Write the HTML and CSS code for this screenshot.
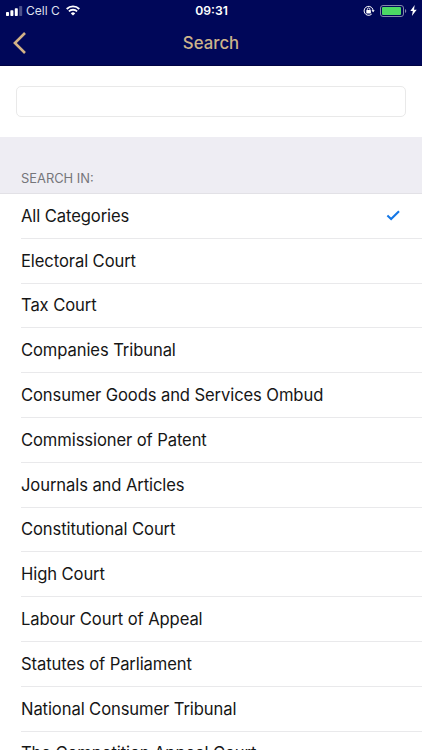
FILE: index.html
```html
<!DOCTYPE html>
<html lang="en">
  <head>
    <meta charset="UTF-8" />
    <meta name="viewport" content="width=device-width, initial-scale=1.0" />
    <title>Search</title>
    <link rel="stylesheet" href="styles.css">
  </head>
  <body>
    <header class="header">
      <div class="status-bar">
        <div class="status-left">
          <svg class="signal" width="17" height="10" viewBox="0 0 17 10" fill="#fff">
            <rect x="0" y="6" width="3" height="4" rx="0.7" />
            <rect x="4.4" y="4.2" width="3" height="5.8" rx="0.7" />
            <rect x="8.8" y="2.2" width="3" height="7.8" rx="0.7" />
            <rect x="13.2" y="0" width="3" height="10" rx="0.7" opacity="0.3" />
          </svg>
          <span class="carrier">Cell C</span>
          <svg class="wifi" width="14" height="11" viewBox="0 0 14 11" fill="none" stroke="#fff" stroke-width="1.8">
            <path d="M0.7 4a9 9 0 0 1 12.6 0" />
            <path d="M2.9 6.4a5.9 5.9 0 0 1 8.2 0" />
            <path d="M7 10.6L4.8 8.4a3.2 3.2 0 0 1 4.4 0z" fill="#fff" stroke="none" />
          </svg>
        </div>
        <span class="time">09:31</span>
        <div class="status-right">
          <svg width="12" height="12" viewBox="0 0 12 12" fill="none" stroke="#fff">
            <path d="M10.1 6.1a4.5 4.5 0 1 0-1.4 3" />
            <path d="M8.5 5.2h3.2L10.1 7.3z" fill="#fff" stroke="none" />
            <rect x="3.3" y="5" width="4.6" height="3.4" rx="0.4" fill="#fff" stroke="none" />
            <path d="M4.3 5.2V4.3a1.3 1.3 0 0 1 2.6 0v.9" stroke-width="0.9" />
          </svg>
          <svg width="27" height="12" viewBox="0 0 27 12">
            <rect x="0.5" y="0.5" width="23" height="11" rx="2.5" fill="none" stroke="#8286aa" />
            <rect x="2" y="2" width="19" height="8" rx="1" fill="#4cd964" />
            <path d="M25 4v4a2.2 2.2 0 0 0 0-4z" fill="#8286aa" />
          </svg>
          <svg width="7" height="11" viewBox="0 0 7 11" fill="#fff">
            <path d="M4.7 0L0.3 6h2.5L1.9 11 6.7 4.7H4z" />
          </svg>
        </div>
      </div>
      <div class="nav-bar">
        <a href="#" class="back" aria-label="Back">
          <svg width="14" height="22" viewBox="0 0 14 22" fill="none" stroke="#d2b286" stroke-width="2.6">
            <path d="M12 1L1.9 11 12 21" />
          </svg>
        </a>
        <h1>Search</h1>
      </div>
    </header>

    <div class="search-box">
      <input type="text" class="search-input" aria-label="Search" />
    </div>

    <h2 class="section-title">SEARCH IN:</h2>

    <ul class="categories">
      <li class="category">
        All Categories
        <svg class="check" width="14" height="11" viewBox="0 0 14 11" fill="none" stroke="#1477e6" stroke-width="2.1">
          <path d="M1.4 5.6l3.7 3.4L13 1.2" />
        </svg>
      </li>
      <li class="category">Electoral Court</li>
      <li class="category">Tax Court</li>
      <li class="category">Companies Tribunal</li>
      <li class="category">Consumer Goods and Services Ombud</li>
      <li class="category">Commissioner of Patent</li>
      <li class="category">Journals and Articles</li>
      <li class="category">Constitutional Court</li>
      <li class="category">High Court</li>
      <li class="category">Labour Court of Appeal</li>
      <li class="category">Statutes of Parliament</li>
      <li class="category">National Consumer Tribunal</li>
      <li class="category">The Competition Appeal Court</li>
    </ul>
  </body>
</html>
```
FILE: styles.css
```css
:root {
  --navy: #000759;
  --gold: #cdb38b;
  --section-bg: #eeedf3;
  --line: #e9e9eb;
  --text: #161616;
}

* {
  box-sizing: border-box;
  margin: 0;
  padding: 0;
}

body {
  height: 100vh;
  overflow: hidden;
  background: #fff;
  color: var(--text);
  font-family: Inter, "Liberation Sans", sans-serif;
}

.header {
  height: 66px;
  background: var(--navy);
  border-bottom: 1px solid #000344;
}

.status-bar {
  display: grid;
  grid-template-columns: 1fr auto 1fr;
  align-items: center;
  height: 21px;
  padding: 0 5px 0 6px;
  color: #fff;
  font-size: 12px;
}

.status-left,
.status-right {
  display: flex;
  align-items: center;
}

.carrier {
  margin: 0 6px 0 3px;
  font-size: 12px;
  color: #dfe0ee;
}

.time {
  font-weight: 600;
  font-size: 12.2px;
}

.status-right {
  justify-content: flex-end;
  gap: 5px;
}

.status-right svg:last-child {
  margin-left: -2px;
}

.nav-bar {
  display: grid;
  grid-template-columns: 1fr auto 1fr;
  align-items: center;
  height: 43px;
  padding: 0 13px;
}

.back {
  display: flex;
}

h1 {
  color: var(--gold);
  font-size: 16.8px;
  font-weight: 500;
}

.search-box {
  height: 71px;
  padding: 20px 16px 0;
}

.search-input {
  display: block;
  width: 100%;
  height: 31px;
  padding: 0 8px;
  border: 1px solid #e9e9e9;
  border-radius: 5px;
  background: #fff;
  font: inherit;
  outline: none;
}

.section-title {
  height: 57px;
  padding: 34px 21px 0;
  background: var(--section-bg);
  border-bottom: 1px solid #e2e1e6;
  color: #75757a;
  font-size: 12.9px;
  font-weight: 400;
  line-height: 16px;
}

.categories {
  padding-left: 21px;
  list-style: none;
}

.category {
  display: flex;
  align-items: center;
  justify-content: space-between;
  height: 44.8px;
  padding-right: 22px;
  border-bottom: 1px solid var(--line);
  font-size: 16.6px;
  letter-spacing: -0.1px;
  white-space: nowrap;
}
```
